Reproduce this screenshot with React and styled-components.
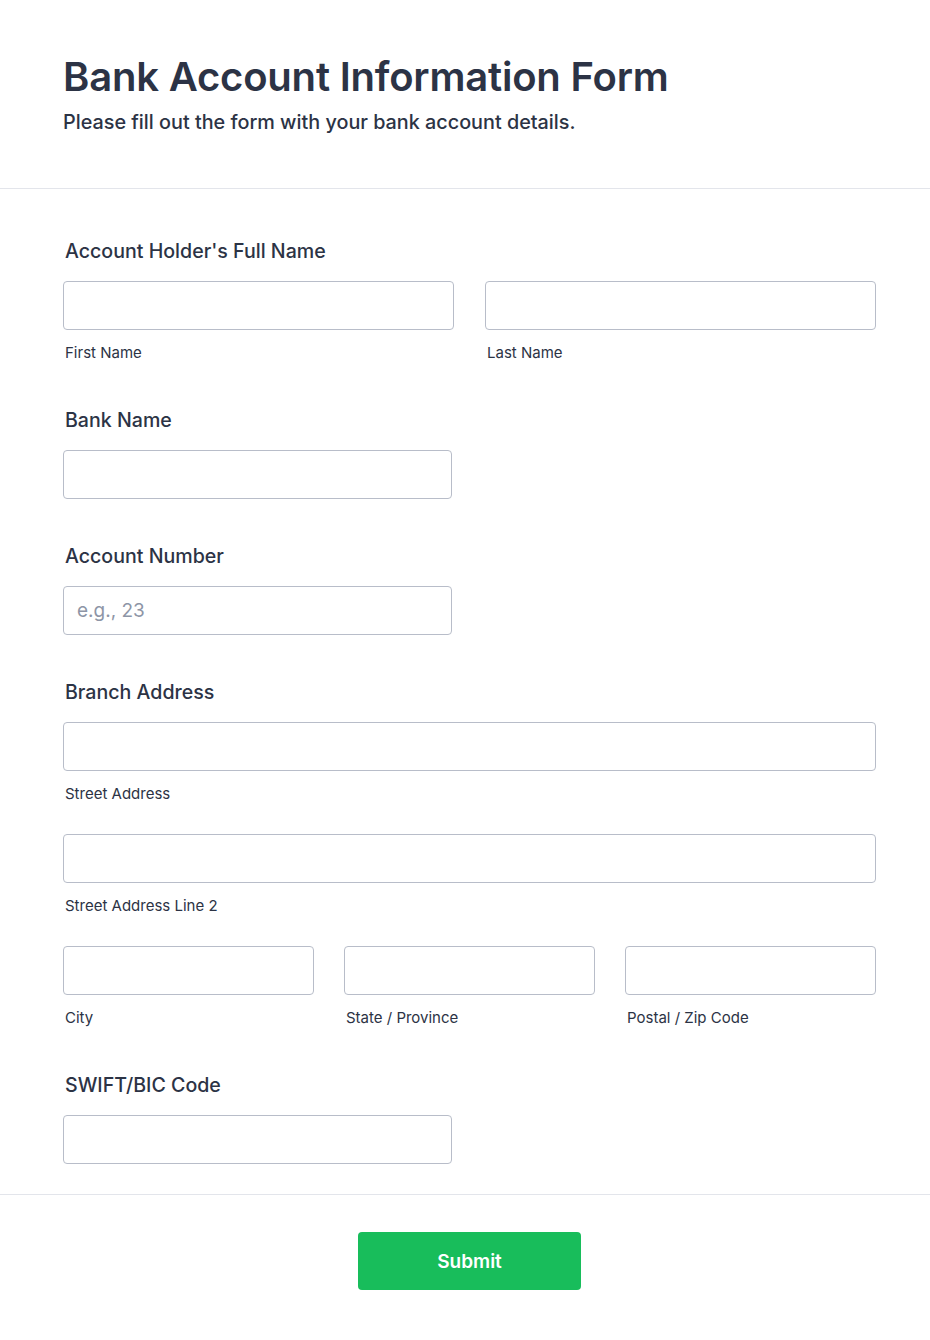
import styled, { createGlobalStyle } from 'styled-components'

const GlobalStyle = createGlobalStyle`
    html, body {
        margin: 0;
        padding: 0;
        background: #ffffff;
    }
    body {
        font-family: Inter, "Noto Sans", "Liberation Sans", sans-serif;
        color: #2c3345;
    }
    * {
        box-sizing: border-box;
    }
`

const Page = styled.div`
    width: 930px;
    min-height: 1340px;
    background: #ffffff;
`

const Header = styled.header`
    padding: 53px 54px 0 63px;
    height: 189px;
    border-bottom: 1px solid #e3e5eb;
`

const Title = styled.h1`
    margin: 0;
    font-size: 40px;
    line-height: 48px;
    font-weight: 600;
    color: #2c3345;
    letter-spacing: -0.2px;
`

const Subtitle = styled.p`
    margin: 8px 0 0;
    font-size: 19.8px;
    line-height: 26px;
    font-weight: 500;
    color: #2c3345;
`

const Form = styled.form`
    display: flex;
    flex-direction: column;
    gap: 42px;
    padding: 47px 54px 30px 63px;
    border-bottom: 1px solid #e3e5eb;
`

const Field = styled.div`
    display: flex;
    flex-direction: column;
`

const Label = styled.label`
    display: block;
    padding-left: 2px;
    margin-bottom: 15px;
    font-size: 19.6px;
    line-height: 30px;
    font-weight: 500;
    color: #2c3345;
`

const Row = styled.div`
    display: grid;
    grid-template-columns: repeat(${(p) => p.cols || 1}, 1fr);
    column-gap: ${(p) => (p.cols === 3 ? 30 : 31)}px;
    & + & {
        margin-top: 30px;
    }
`

const Cell = styled.div`
    display: flex;
    flex-direction: column;
`

const Input = styled.input`
    width: ${(p) => (p.half ? '389px' : '100%')};
    height: 49px;
    padding: 0 13px;
    border: 1px solid #b8bdc9;
    border-radius: 4px;
    background: #ffffff;
    font-family: inherit;
    font-size: 19px;
    color: #2c3345;
    outline: none;
    &::placeholder {
        color: #8d95a6;
    }
`

const SubLabel = styled.span`
    display: block;
    margin-top: 13px;
    padding-left: 2px;
    font-size: 15px;
    line-height: 20px;
    font-weight: 400;
    color: #2c3345;
`

const Footer = styled.div`
    display: flex;
    justify-content: center;
    padding: 37px 54px 0 63px;
`

const SubmitButton = styled.button`
    width: 223px;
    height: 58px;
    border: none;
    border-radius: 4px;
    background: #18bd5b;
    color: #ffffff;
    font-family: inherit;
    font-size: 19px;
    font-weight: 600;
    cursor: pointer;
`

const App = () => {
    return (
        <Page>
            <GlobalStyle />
            <Header>
                <Title>Bank Account Information Form</Title>
                <Subtitle>Please fill out the form with your bank account details.</Subtitle>
            </Header>
            <Form onSubmit={(e) => e.preventDefault()}>
                <Field>
                    <Label>Account Holder's Full Name</Label>
                    <Row cols={2}>
                        <Cell>
                            <Input type="text" />
                            <SubLabel>First Name</SubLabel>
                        </Cell>
                        <Cell>
                            <Input type="text" />
                            <SubLabel>Last Name</SubLabel>
                        </Cell>
                    </Row>
                </Field>
                <Field>
                    <Label>Bank Name</Label>
                    <Input type="text" half />
                </Field>
                <Field>
                    <Label>Account Number</Label>
                    <Input type="text" half placeholder="e.g., 23" />
                </Field>
                <Field>
                    <Label>Branch Address</Label>
                    <Row>
                        <Cell>
                            <Input type="text" />
                            <SubLabel>Street Address</SubLabel>
                        </Cell>
                    </Row>
                    <Row>
                        <Cell>
                            <Input type="text" />
                            <SubLabel>Street Address Line 2</SubLabel>
                        </Cell>
                    </Row>
                    <Row cols={3}>
                        <Cell>
                            <Input type="text" />
                            <SubLabel>City</SubLabel>
                        </Cell>
                        <Cell>
                            <Input type="text" />
                            <SubLabel>State / Province</SubLabel>
                        </Cell>
                        <Cell>
                            <Input type="text" />
                            <SubLabel>Postal / Zip Code</SubLabel>
                        </Cell>
                    </Row>
                </Field>
                <Field>
                    <Label>SWIFT/BIC Code</Label>
                    <Input type="text" half />
                </Field>
            </Form>
            <Footer>
                <SubmitButton type="submit">Submit</SubmitButton>
            </Footer>
        </Page>
    )
}

export default App
